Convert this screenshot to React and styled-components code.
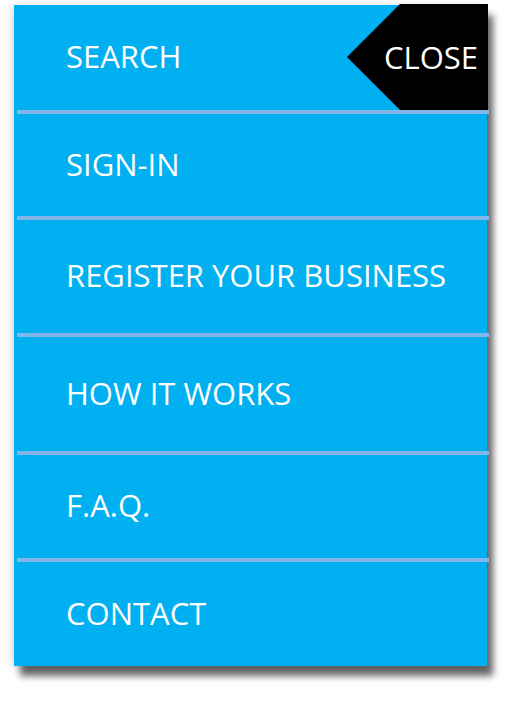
import React from 'react';
import styled, { createGlobalStyle } from 'styled-components';

const GlobalStyle = createGlobalStyle`
  body {
    margin: 0;
    background: #ffffff;
    font-family: "Open Sans", "Liberation Sans", sans-serif;
  }
`;

const Page = styled.div`
  width: 512px;
  height: 708px;
  padding: 5px 0 0 14px;
  box-sizing: border-box;
`;

const Menu = styled.nav`
  position: relative;
  width: 473px;
  background: #00b0f0;
  display: flex;
  flex-direction: column;
  box-shadow: 6px 10px 7px rgba(0, 0, 0, 0.6), -3px 0 8px rgba(0, 0, 0, 0.12);
`;

const Item = styled.a`
  display: flex;
  align-items: center;
  height: ${({ $h }) => $h}px;
  padding: 0 0 3px 52px;
  box-sizing: border-box;
  color: #ffffff;
  font-size: 31px;
  font-weight: 400;
  text-decoration: none;
  text-transform: uppercase;
`;

const Separator = styled.div`
  height: 4px;
  margin: 0 -2px 0 3px;
  background: #82b5ea;
`;

const CloseButton = styled.button`
  position: absolute;
  top: -1px;
  right: -1px;
  width: 141px;
  height: 106px;
  border: 0;
  padding: 0 10px 0 0;
  background: #000000;
  clip-path: polygon(53px 0, 100% 0, 100% 100%, 53px 100%, 0 50%);
  color: #ffffff;
  font-family: inherit;
  font-size: 31px;
  display: flex;
  align-items: center;
  justify-content: flex-end;
  cursor: pointer;
`;

const items = [
  { label: 'Search', h: 105 },
  { label: 'Sign-in', h: 102 },
  { label: 'Register your business', h: 113 },
  { label: 'How it works', h: 114 },
  { label: 'F.A.Q.', h: 103 },
  { label: 'Contact', h: 104 },
];

export default function App() {
  return (
    <Page>
      <GlobalStyle />
      <Menu>
        {items.map((item, i) => (
          <React.Fragment key={item.label}>
            {i > 0 && <Separator />}
            <Item href="#" $h={item.h}>{item.label}</Item>
          </React.Fragment>
        ))}
        <CloseButton>CLOSE</CloseButton>
      </Menu>
    </Page>
  );
}
